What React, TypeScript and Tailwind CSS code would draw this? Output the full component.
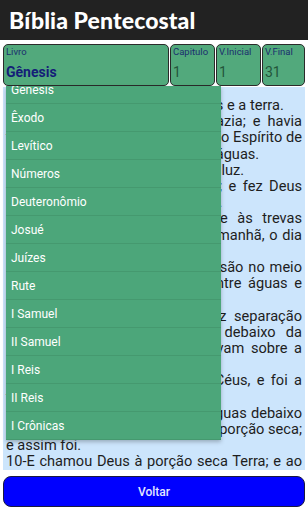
import React from "react";

const books = [
  "Gênesis",
  "Êxodo",
  "Levítico",
  "Números",
  "Deuteronômio",
  "Josué",
  "Juízes",
  "Rute",
  "I Samuel",
  "II Samuel",
  "I Reis",
  "II Reis",
  "I Crônicas",
  "II Crônicas",
];

const verses = [
  "1-No princípio criou Deus os céus e a terra.",
  "2-E a terra era sem forma e vazia; e havia trevas sobre a face do abismo; e o Espírito de Deus se movia sobre a face das águas.",
  "3-E disse Deus: Haja luz; e houve luz.",
  "4-E viu Deus que era boa a luz; e fez Deus separação entre a luz e as trevas.",
  "5-E Deus chamou à luz Dia; e às trevas chamou Noite. E foi a tarde e a manhã, o dia primeiro.",
  "6-E disse Deus: Haja uma expansão no meio das águas, e haja separação entre águas e águas.",
  "7-E fez Deus a expansão, e fez separação entre as águas que estavam debaixo da expansão e as águas que estavam sobre a expansão; e assim foi.",
  "8-E chamou Deus à expansão Céus, e foi a tarde e a manhã, o dia segundo.",
  "9-E disse Deus: Ajuntem-se as águas debaixo dos céus num lugar; e apareça a porção seca; e assim foi.",
  "10-E chamou Deus à porção seca Terra; e ao ajuntamento das águas chamou Mares; e viu Deus que era bom.",
];

function Field({ label, value, bold, className }: { label: string; value: string; bold?: boolean; className: string }) {
  return (
    <div className={`h-[42px] rounded-[5px] border border-[#2b2b2b] bg-[#52a97c] px-[2px] flex flex-col ${className}`}>
      <span className="text-[9.5px] leading-[12px] text-[#1b2f6e] mt-[1px]">{label}</span>
      <span
        className={`text-[14px] leading-[18px] mt-[5px] ${bold ? "font-bold text-[#141d78]" : "text-[#24553a]"}`}
      >
        {value}
      </span>
    </div>
  );
}

export default function App() {
  return (
    <div className="relative w-[308px] h-[512px] overflow-hidden bg-white font-['Roboto',sans-serif]">
      <div className="h-[40px] bg-[#222222] flex items-center px-[9px]">
        <h1 className="text-white text-[23px] font-black font-['Lato',sans-serif] tracking-[0.1px]">
          Bíblia Pentecostal
        </h1>
      </div>

      <div className="mt-[4px] mx-[3px] flex gap-[1px]">
        <Field label="Livro" value="Gênesis" bold className="w-[166px]" />
        <Field label="Capitulo" value="1" className="w-[45px]" />
        <Field label="V.Inicial" value="1" className="w-[45px]" />
        <Field label="V.Final" value="31" className="flex-1" />
      </div>

      <div className="mt-[1px] mx-[3px] h-[383px] bg-[#cce5fc] px-[3px] pt-[10px] overflow-hidden">
        <div className="text-[14.6px] leading-[16.2px] text-[#1e1e1e] text-justify">
          {verses.map((v) => (
            <p key={v}>{v}</p>
          ))}
        </div>
      </div>

      <button className="mt-[6px] mx-[3px] w-[302px] h-[31px] rounded-[8px] border border-[#1a1a40] bg-[#0000ff] text-[12px] font-medium text-[#e4e6ff]">
        Voltar
      </button>

      <div className="absolute left-[6px] top-[86px] w-[215px] h-[354px] overflow-hidden bg-[#4ca67a] shadow-[0_2px_4px_rgba(0,0,0,0.25)]">
        <div className="-mt-[10px]">
          {books.map((b) => (
            <div
              key={b}
              className="h-[28px] border-b border-[#45996f] px-[5px] flex items-center text-[12px] text-white"
            >
              {b}
            </div>
          ))}
        </div>
      </div>
    </div>
  );
}
